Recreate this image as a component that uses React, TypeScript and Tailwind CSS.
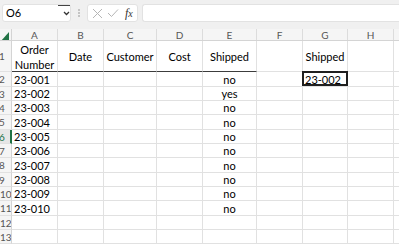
import React from "react";

const colW = ["w-[46px]", "w-[46px]", "w-[53px]", "w-[46px]", "w-[54px]", "w-[46px]", "w-[45px]", "w-[46px]"];
const letters = ["A", "B", "C", "D", "E", "F", "G", "H"];
const rowH = ["h-[15px]", "h-[14px]", "h-[14px]", "h-[15px]", "h-[14px]", "h-[14px]", "h-[15px]", "h-[14px]", "h-[14px]", "h-[15px]", "h-[14px]", "h-[14px]"];

function RowHead({ n, cls, active }: { n: number; cls: string; active?: boolean }) {
  return (
    <div
      className={`${cls} w-[12px] shrink-0 flex items-center overflow-hidden border-b border-[#e1e1e1] ${
        active ? "bg-[#e6e6e6] border-r-2 border-r-[#217346] text-[#217346]" : "bg-[#f5f5f5] border-r border-r-[#d4d4d4] text-[#555]"
      } text-[10px] leading-none`}
    >
      <span className={n < 10 ? "-ml-[1px]" : "ml-0"}>{n}</span>
    </div>
  );
}

export default function App() {
  const data = Array.from({ length: 12 }, (_, i) => {
    const r = i + 2;
    const id = r <= 11 ? `23-${String(r - 1).padStart(3, "0")}` : "";
    const ship = r <= 11 ? (r === 3 ? "yes" : "no") : "";
    return { r, id, ship };
  });
  return (
    <div className="w-[399px] h-[245px] overflow-hidden bg-white font-[Lato,'Liberation_Sans',sans-serif] text-black select-none">
      {/* toolbar */}
      <div className="h-[29px] bg-[#f0f0f0] flex items-start pt-[4px] pl-[2px] gap-0">
        <div className="relative w-[69px] h-[18px] bg-white rounded-[3px] border border-[#e2e2e2] flex items-center pl-[3px] text-[11px]">
          <span>O6</span>
          <div className="absolute left-[55px] top-[0px] w-[12px] h-[1px] bg-[#444]" />
          <svg className="absolute left-[60px] top-[6px]" width="7" height="5" viewBox="0 0 7 5">
            <path d="M1 1 L3.5 3.5 L6 1" stroke="#333" strokeWidth="1.3" fill="none" />
          </svg>
        </div>
        <div className="w-[16px] h-[18px] flex items-center justify-center">
          <svg width="2" height="8" viewBox="0 0 2 8">
            <circle cx="1" cy="1" r="0.7" fill="#777" />
            <circle cx="1" cy="4" r="0.7" fill="#777" />
            <circle cx="1" cy="7" r="0.7" fill="#777" />
          </svg>
        </div>
        <div className="w-[51px] h-[18px] bg-white rounded-[3px] border border-[#e2e2e2] flex items-center pl-[4px] gap-[4px]">
          <svg width="11" height="11" viewBox="0 0 11 11">
            <path d="M1 1 L10 10 M10 1 L1 10" stroke="#b5b5b5" strokeWidth="1" fill="none" />
          </svg>
          <svg width="12" height="10" viewBox="0 0 12 10">
            <path d="M1 5 L4.5 8.5 L11 1.5" stroke="#b5b5b5" strokeWidth="1" fill="none" />
          </svg>
          <span className="font-['Liberation_Serif',serif] italic text-[12px] text-[#333] leading-none ml-[2px]">
            f<span className="text-[10px]">x</span>
          </span>
        </div>
        <div className="ml-[4px] flex-1 h-[18px] bg-white rounded-l-[3px] border border-r-0 border-[#e2e2e2]" />
      </div>

      {/* column header row */}
      <div className="flex h-[12px] bg-[#f5f5f5] border-b border-[#d4d4d4]">
        <div className="w-[12px] shrink-0 border-r border-[#d4d4d4] relative overflow-hidden">
          <svg className="absolute left-[1px] top-[3px]" width="8" height="9" viewBox="0 0 8 9">
            <path d="M8 0 L8 9 L0 9 Z" fill="#217346" />
          </svg>
        </div>
        {letters.map((l, i) => (
          <div key={l} className={`${colW[i]} shrink-0 border-r border-[#dcdcdc] flex items-center justify-center text-[10px] text-[#555] leading-none`}>
            {l}
          </div>
        ))}
        <div className="flex-1" />
      </div>

      {/* row 1 */}
      <div className="flex h-[31px]">
        <RowHead n={1} cls="h-[31px]" />
        {["Order|Number", "Date", "Customer", "Cost", "Shipped", "", "Shipped", ""].map((t, i) => (
          <div
            key={i}
            className={`${colW[i]} shrink-0 border-r border-[#e1e1e1] ${i < 5 ? "border-b border-b-[#3c3c3c]" : "border-b border-b-[#e1e1e1]"} flex flex-col items-center justify-center text-[11px] leading-[15px] pt-[1px]`}
          >
            {t.split("|").map((p, j) => (
              <span key={j}>{p}</span>
            ))}
          </div>
        ))}
        <div className="flex-1 border-b border-[#e1e1e1]" />
      </div>

      {/* data rows */}
      {data.map((d, k) => (
        <div key={d.r} className="flex">
          <RowHead n={d.r} cls={rowH[k]} active={d.r === 6} />
          {colW.map((w, i) => (
            <div
              key={i}
              className={`${w} ${rowH[k]} shrink-0 border-r border-b border-[#e1e1e1] flex items-center text-[11px] leading-none relative ${
                i === 4 ? "justify-center" : "justify-start pl-[2px]"
              }`}
            >
              {i === 0 && d.id}
              {i === 4 && d.ship}
              {i === 6 && d.r === 2 && (
                <>
                  <span>23-002</span>
                  <div className="absolute -left-[1px] -top-[1px] -right-[1px] bottom-0 border-2 border-[#1f1f1f]" />
                </>
              )}
            </div>
          ))}
          <div className={`flex-1 ${rowH[k]} border-b border-[#e1e1e1]`} />
        </div>
      ))}
    </div>
  );
}
